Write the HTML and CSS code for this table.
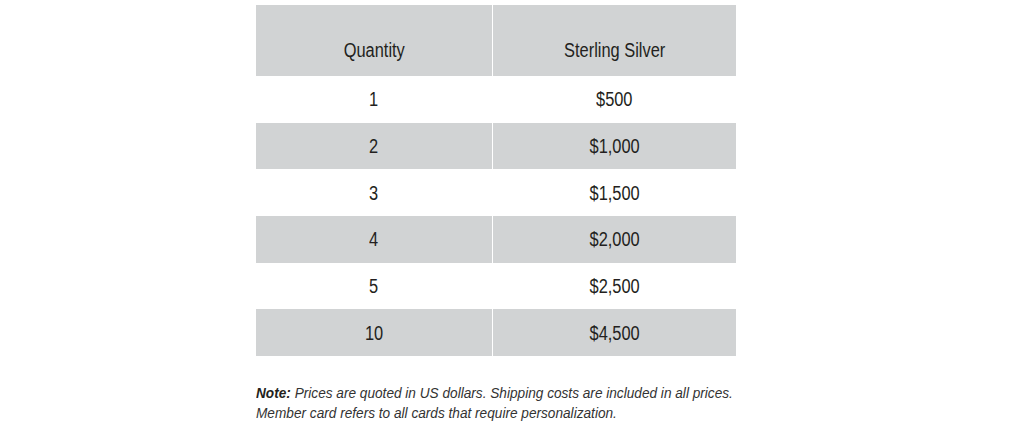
FILE: index.html
```html
<!DOCTYPE html>
<html>
<head>
<meta charset="utf-8">
<link rel="stylesheet" href="styles.css">
</head>
<body>
<div class="page">
  <table class="price-table">
    <thead>
      <tr><th class="qty"><span class="cx">Quantity</span></th><th><span class="cx">Sterling Silver</span></th></tr>
    </thead>
    <tbody>
      <tr><td class="qty"><span class="cx">1</span></td><td><span class="cx">$500</span></td></tr>
      <tr class="alt"><td class="qty"><span class="cx">2</span></td><td><span class="cx">$1,000</span></td></tr>
      <tr><td class="qty"><span class="cx">3</span></td><td><span class="cx">$1,500</span></td></tr>
      <tr class="alt"><td class="qty"><span class="cx">4</span></td><td><span class="cx">$2,000</span></td></tr>
      <tr><td class="qty"><span class="cx">5</span></td><td><span class="cx">$2,500</span></td></tr>
      <tr class="alt"><td class="qty"><span class="cx">10</span></td><td><span class="cx">$4,500</span></td></tr>
    </tbody>
  </table>
  <p class="note"><b>Note:</b> Prices are quoted in US dollars. Shipping costs are included in all prices.<br>Member card refers to all cards that require personalization.</p>
</div>
</body>
</html>
```

FILE: styles.css
```css
html, body {
  margin: 0;
  padding: 0;
  background: #ffffff;
}
.page {
  padding: 5px 0 0 256px;
  font-family: "Liberation Sans", Arial, sans-serif;
  color: #231f20;
}
.price-table {
  border-collapse: collapse;
  width: 480px;
  table-layout: fixed;
}
.price-table th,
.price-table td {
  font-weight: normal;
  font-size: 20px;
  line-height: 22px;
  text-align: center;
  padding: 0;
}
.cx {
  display: inline-block;
  transform: scaleX(0.82);
  white-space: nowrap;
}
.price-table th {
  background: #d1d3d4;
  height: 71px;
  box-sizing: border-box;
  padding-top: 34px;
  padding-bottom: 15px;
  vertical-align: top;
}
.price-table td {
  height: 46.67px;
  vertical-align: middle;
}
.price-table .qty {
  width: 236px;
  border-right: 1px solid #ffffff;
}
.price-table .alt td {
  background: #d1d3d4;
}
.note {
  margin: 27px 0 0 0;
  font-style: italic;
  font-size: 15.5px;
  line-height: 20px;
  color: #333333;
  white-space: nowrap;
  transform: scaleX(0.88);
  transform-origin: left top;
}
.note b {
  color: #231f20;
}
```
